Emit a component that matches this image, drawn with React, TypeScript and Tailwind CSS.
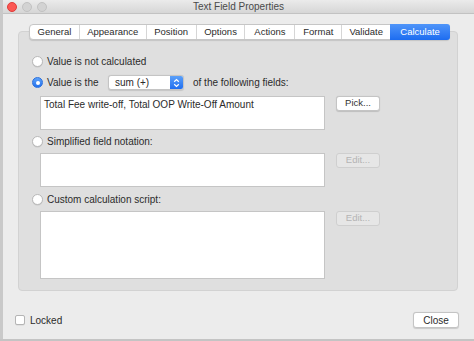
import React from "react";

const tabs: { label: string; w: number; active?: boolean }[] = [
  { label: "General", w: 49 },
  { label: "Appearance", w: 67 },
  { label: "Position", w: 50 },
  { label: "Options", w: 49 },
  { label: "Actions", w: 50 },
  { label: "Format", w: 47 },
  { label: "Validate", w: 49 },
  { label: "Calculate", w: 60, active: true },
];

function Radio({ checked }: { checked?: boolean }) {
  if (checked) {
    return (
      <div className="w-[11px] h-[11px] rounded-full bg-gradient-to-b from-[#5ea2f8] to-[#2170ee] border border-[#2a6fdd] flex items-center justify-center shrink-0">
        <div className="w-[4px] h-[4px] rounded-full bg-white" />
      </div>
    );
  }
  return (
    <div className="w-[11px] h-[11px] rounded-full bg-white border border-[#b9b9b9] shadow-[0_0.5px_0.5px_rgba(0,0,0,0.1)] shrink-0" />
  );
}

function Btn({ label, disabled }: { label: string; disabled?: boolean }) {
  return (
    <div
      className={
        "w-[44px] h-[15px] rounded-[3px] border flex items-center justify-center text-[9.5px] " +
        (disabled
          ? "bg-[#e6e6e6] border-[#cfcfcf] text-[#b4b4b4]"
          : "bg-white border-[#c4c4c4] text-[#333] shadow-[0_0.5px_1px_rgba(0,0,0,0.15)]")
      }
    >
      {label}
    </div>
  );
}

export default function App() {
  return (
    <div
      className="w-[474px] h-[341px] bg-[#c4c4c4] flex text-[#2b2b2b] overflow-hidden"
      style={{ fontFamily: '"Liberation Sans", Arial, sans-serif' }}
    >
      <div className="w-[3px] h-[339px] bg-[#c9c9c9]" />
      <div className="w-[471px] h-[339px] bg-[#ececec] flex flex-col">
        {/* title bar */}
        <div className="relative h-[14px] bg-gradient-to-b from-[#ebebeb] to-[#d6d6d6] border-b border-[#c2c2c2] flex items-center shrink-0">
          <div className="flex items-center gap-[5px] pl-[4px]">
            <div className="w-[10px] h-[10px] rounded-full bg-[#fc5753] border border-[#df3d3a]" />
            <div className="w-[10px] h-[10px] rounded-full bg-[#d3d3d3] border border-[#c2c2c2]" />
            <div className="w-[10px] h-[10px] rounded-full bg-[#d3d3d3] border border-[#c2c2c2]" />
          </div>
          <div className="absolute inset-0 flex items-center justify-center text-[10px] text-[#4a4a4a]">
            Text Field Properties
          </div>
        </div>

        {/* body */}
        <div className="flex flex-col pl-[15px] pt-[10px]">
          {/* tabs */}
          <div className="relative z-10 flex ml-[11px] h-[16px] w-[421px] bg-white border border-[#c6c6c6] rounded-[4px] shadow-[0_1px_1px_rgba(0,0,0,0.12)]">
            {tabs.map((t, i) => (
              <div
                key={t.label}
                style={{ width: t.w }}
                className={
                  "flex items-center justify-center text-[9.5px] " +
                  (t.active
                    ? "bg-gradient-to-b from-[#4f95f9] to-[#1c6cf0] text-white rounded-r-[3px] -my-px -mr-px"
                    : "text-[#2b2b2b]" + (i > 0 ? " border-l border-[#d6d6d6]" : ""))
                }
              >
                {t.label}
              </div>
            ))}
          </div>

          {/* panel */}
          <div className="-mt-[9px] w-[440px] h-[260px] bg-[#dfdfdf] border border-[#d2d2d2] rounded-[4px] flex flex-col pl-[13px] pt-[22px]">
            <div className="flex items-center gap-[4px] h-[14px]">
              <Radio />
              <span className="text-[10px]">Value is not calculated</span>
            </div>
            <div className="flex items-center h-[15px] mt-[7px]">
              <Radio checked />
              <span className="text-[10px] ml-[4px] w-[61px]">Value is the</span>
              <div className="w-[76px] h-[15px] bg-white border border-[#c4c4c4] rounded-[3px] flex shadow-[0_0.5px_1px_rgba(0,0,0,0.12)]">
                <span className="flex-1 pl-[6px] text-[10px] leading-[13px]">sum (+)</span>
                <div className="w-[13px] h-full bg-gradient-to-b from-[#5ba0f9] to-[#1f6ef0] rounded-r-[2px] flex items-center justify-center">
                  <svg width="7" height="10" viewBox="0 0 7 10" fill="none" stroke="white" strokeWidth="1.2">
                    <path d="M1.2 3.8 L3.5 1.6 L5.8 3.8" />
                    <path d="M1.2 6.2 L3.5 8.4 L5.8 6.2" />
                  </svg>
                </div>
              </div>
              <span className="text-[10px] ml-[9px]">of the following fields:</span>
            </div>
            <div className="flex items-start mt-[6px] pl-[8px]">
              <div className="w-[285px] h-[34px] bg-white border border-[#c5c5c5] px-[3px] pt-[1px] text-[10px] leading-[13px]">
                Total Fee write-off, Total OOP Write-Off Amount
              </div>
              <div className="ml-[11px]">
                <Btn label="Pick..." />
              </div>
            </div>
            <div className="flex items-center gap-[4px] h-[14px] mt-[4px]">
              <Radio />
              <span className="text-[10px]">Simplified field notation:</span>
            </div>
            <div className="flex items-start mt-[5px] pl-[8px]">
              <div className="w-[285px] h-[34px] bg-white border border-[#c5c5c5]" />
              <div className="ml-[11px]">
                <Btn label="Edit..." disabled />
              </div>
            </div>
            <div className="flex items-center gap-[4px] h-[14px] mt-[5px]">
              <Radio />
              <span className="text-[10px]">Custom calculation script:</span>
            </div>
            <div className="flex items-start mt-[5px] pl-[8px]">
              <div className="w-[285px] h-[68px] bg-white border border-[#c5c5c5]" />
              <div className="ml-[11px]">
                <Btn label="Edit..." disabled />
              </div>
            </div>
          </div>

          {/* bottom */}
          <div className="flex items-center h-[16px] mt-[21px] pr-[15px] -ml-[3px]">
            <div className="w-[10px] h-[10px] bg-white border border-[#b5b5b5] rounded-[2px] shadow-[0_0.5px_0.5px_rgba(0,0,0,0.1)]" />
            <span className="text-[10px] ml-[5px]">Locked</span>
            <div className="flex-1" />
            <div className="w-[46px] h-[16px] bg-white border border-[#c4c4c4] rounded-[3px] flex items-center justify-center text-[10px] shadow-[0_0.5px_1px_rgba(0,0,0,0.15)]">
              Close
            </div>
          </div>
        </div>
      </div>
    </div>
  );
}
